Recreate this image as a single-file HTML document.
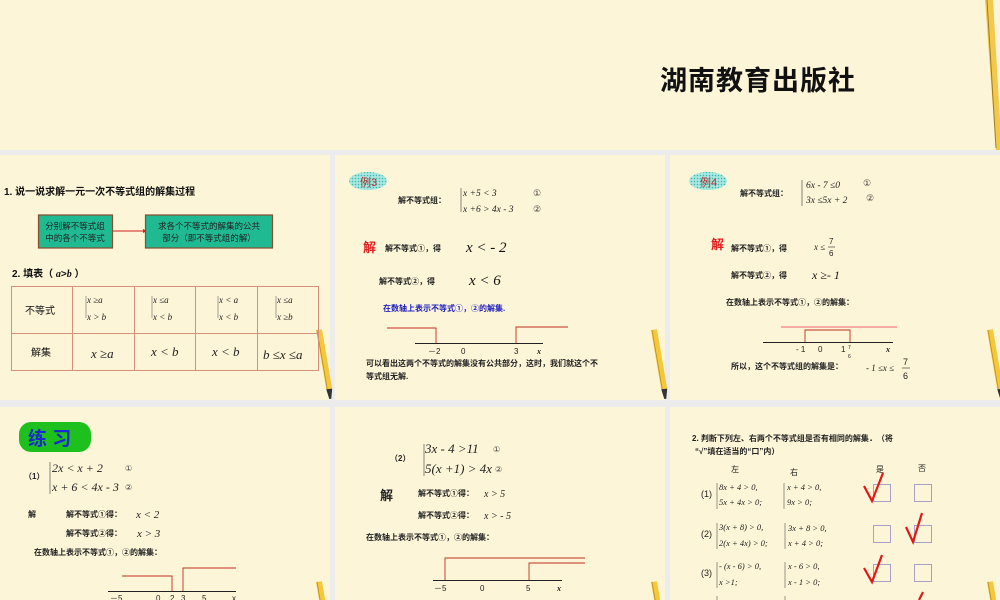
<!DOCTYPE html>
<html><head><meta charset="utf-8"><style>
html,body{margin:0;padding:0;background:#ececec;width:1000px;height:600px;overflow:hidden;}
svg{display:block}
.c{font-family:"Liberation Sans","Noto Sans CJK SC",sans-serif;}
.b{font-weight:bold}
.m{font-family:"Liberation Serif",serif;font-style:italic}
.n{font-family:"Liberation Sans",sans-serif}
</style></head><body>
<svg width="1000" height="600" viewBox="0 0 1000 600" xmlns="http://www.w3.org/2000/svg">
<defs>
<pattern id="dots" width="3" height="3" patternUnits="userSpaceOnUse"><rect width="3" height="3" fill="#a8e8e0"/><circle cx="1.5" cy="1.5" r="0.8" fill="#40b8b0"/></pattern>
<g id="pen"><polygon points="0,0 6,0 10,60 4,60" fill="#f4c83a"/><line x1="1" y1="0" x2="5" y2="60" stroke="#b89020" stroke-width="0.8"/><polygon points="4,60 10,60 8,70 6,70" fill="#333"/></g>
</defs>
<rect width="1000" height="600" fill="#ececec"/>
<!-- banner -->
<rect x="0" y="0" width="1000" height="150" fill="#fdf5d8"/>
<text x="660" y="90" class="c b" font-size="27" fill="#111" textLength="195">湖南教育出版社</text>
<polygon points="985,0 993,0 1000,120 1000,150 996,150" fill="#f2c94c"/>
<line x1="987" y1="0" x2="996" y2="148" stroke="#a07d20" stroke-width="1"/>
<!-- slides -->
<rect x="0" y="155" width="330" height="245" fill="#fdf5d8"/>
<rect x="335" y="155" width="330" height="245" fill="#fdf5d8"/>
<rect x="670" y="155" width="330" height="245" fill="#fdf5d8"/>
<rect x="0" y="407" width="330" height="193" fill="#fdf5d8"/>
<rect x="335" y="407" width="330" height="193" fill="#fdf5d8"/>
<rect x="670" y="407" width="330" height="193" fill="#fdf5d8"/>
<!-- pencils -->
<g transform="translate(316,330) rotate(-6)"><use href="#pen"/></g>
<g transform="translate(651,330) rotate(-6)"><use href="#pen"/></g>
<g transform="translate(987,330) rotate(-6)"><use href="#pen"/></g>
<g transform="translate(316,582) rotate(-6)"><use href="#pen"/></g>
<g transform="translate(651,582) rotate(-6)"><use href="#pen"/></g>
<g transform="translate(987,582) rotate(-6)"><use href="#pen"/></g>

<!-- slide 1 -->
<text x="4" y="195" class="c b" font-size="10" fill="#111">1. 说一说求解一元一次不等式组的解集过程</text>
<rect x="38.5" y="215" width="74" height="33" fill="#1fb992" stroke="#8b4a2b" stroke-width="1.2"/>
<text x="75" y="229" class="c" font-size="8.5" fill="#222" text-anchor="middle">分别解不等式组</text>
<text x="75" y="241" class="c" font-size="8.5" fill="#222" text-anchor="middle">中的各个不等式</text>
<line x1="113" y1="231" x2="143" y2="231" stroke="#d02020" stroke-width="1"/>
<polygon points="143,229 147,231 143,233" fill="#d02020"/>
<rect x="145.5" y="215" width="127" height="33" fill="#1fb992" stroke="#8b4a2b" stroke-width="1.2"/>
<text x="209" y="229" class="c" font-size="8.5" fill="#222" text-anchor="middle">求各个不等式的解集的公共</text>
<text x="209" y="241" class="c" font-size="8.5" fill="#222" text-anchor="middle">部分（即不等式组的解）</text>
<text x="12" y="277" class="c b" font-size="10" fill="#111">2. 填表（ <tspan class="m">a</tspan>&gt;<tspan class="m">b</tspan> ）</text>
<g stroke="#d4907a" stroke-width="1" fill="none">
<rect x="11.5" y="286.5" width="307" height="84"/>
<line x1="11" y1="333.5" x2="319" y2="333.5"/>
<line x1="72.5" y1="286" x2="72.5" y2="371"/>
<line x1="134.5" y1="286" x2="134.5" y2="371"/>
<line x1="195.5" y1="286" x2="195.5" y2="371"/>
<line x1="257.5" y1="286" x2="257.5" y2="371"/>
</g>
<text x="25" y="314" class="c" font-size="10" fill="#111">不等式</text>
<text x="31" y="356" class="c" font-size="10" fill="#111">解集</text>
<g class="m" font-size="9" fill="#222">
<text x="87" y="303">x ≥a</text><text x="87" y="320">x &gt; b</text>
<text x="153" y="303">x ≤a</text><text x="153" y="320">x &lt; b</text>
<text x="219" y="303">x &lt; a</text><text x="219" y="320">x &lt; b</text>
<text x="277" y="303">x ≤a</text><text x="277" y="320">x ≥b</text>
</g>
<path d="M86,296 v22 M152,296 v22 M218,296 v22 M276,296 v22" stroke="#666" stroke-width="0.6"/>
<g class="m" font-size="13" fill="#222">
<text x="91" y="358">x ≥a</text><text x="151" y="356">x &lt; b</text><text x="212" y="356">x &lt; b</text><text x="263" y="359">b ≤x ≤a</text>
</g>

<!-- slide 2 -->
<ellipse cx="368" cy="181" rx="19" ry="9" fill="url(#dots)"/>
<text x="360" y="186" class="c" font-size="11" fill="#b03030">例3</text>
<text x="398" y="203" class="c b" font-size="8" fill="#222">解不等式组：</text>
<path d="M461,188 v24" stroke="#555" stroke-width="0.7" fill="none"/>
<text x="463" y="196" class="m" font-size="9.5" fill="#222">x +5 &lt; 3</text>
<text x="463" y="212" class="m" font-size="9.5" fill="#222">x +6 &gt; 4x - 3</text>
<text x="533" y="196" class="n" font-size="9" fill="#444">①</text>
<text x="533" y="212" class="n" font-size="9" fill="#444">②</text>
<text x="363" y="252" class="c b" font-size="13" fill="#e02020">解</text>
<text x="385" y="251" class="c b" font-size="8" fill="#222">解不等式①，得</text>
<text x="466" y="252" class="m" font-size="15" fill="#111">x &lt; - 2</text>
<text x="379" y="284" class="c b" font-size="8" fill="#222">解不等式②，得</text>
<text x="469" y="285" class="m" font-size="15" fill="#111">x &lt; 6</text>
<text x="383" y="311" class="c b" font-size="8" fill="#2020c0">在数轴上表示不等式①，②的解集.</text>
<line x1="415" y1="343.5" x2="543" y2="343.5" stroke="#222" stroke-width="0.9"/>
<polyline points="387,328 436,328 436,343" fill="none" stroke="#c03020" stroke-width="0.9"/>
<polyline points="516,343 516,327 568,327" fill="none" stroke="#c03020" stroke-width="0.9"/>
<g class="n" font-size="8" fill="#222"><text x="428" y="354">－2</text><text x="461" y="354">0</text><text x="514" y="354">3</text><text x="537" y="354" class="m b">x</text></g>
<text x="366" y="366" class="c b" font-size="8" fill="#222">可以看出这两个不等式的解集没有公共部分，这时，我们就这个不</text>
<text x="366" y="379" class="c b" font-size="8" fill="#222">等式组无解.</text>

<!-- slide 3 -->
<ellipse cx="708" cy="181" rx="19" ry="9" fill="url(#dots)"/>
<text x="700" y="186" class="c" font-size="11" fill="#b03030">例4</text>
<text x="740" y="196" class="c b" font-size="8" fill="#222">解不等式组：</text>
<path d="M802,180 v26" stroke="#555" stroke-width="0.7" fill="none"/>
<text x="806" y="188" class="m" font-size="9.5" fill="#222">6x - 7 ≤0</text>
<text x="806" y="203" class="m" font-size="9.5" fill="#222">3x ≤5x + 2</text>
<text x="863" y="186" class="n" font-size="9" fill="#444">①</text>
<text x="866" y="201" class="n" font-size="9" fill="#444">②</text>
<text x="711" y="249" class="c b" font-size="13" fill="#e02020">解</text>
<text x="731" y="251" class="c b" font-size="8" fill="#222">解不等式①，得</text>
<text x="814" y="250" class="m" font-size="9" fill="#222">x ≤</text>
<text x="829" y="244" class="n" font-size="8" fill="#222">7</text><line x1="828" y1="247" x2="835" y2="247" stroke="#222" stroke-width="0.6"/><text x="829" y="256" class="n" font-size="8" fill="#222">6</text>
<text x="731" y="278" class="c b" font-size="8" fill="#222">解不等式②，得</text>
<text x="812" y="279" class="m" font-size="12" fill="#111">x ≥- 1</text>
<text x="726" y="305" class="c b" font-size="8" fill="#222">在数轴上表示不等式①，②的解集：</text>
<line x1="763" y1="342.5" x2="893" y2="342.5" stroke="#222" stroke-width="0.9"/>
<line x1="781" y1="327" x2="897" y2="327" stroke="#f06070" stroke-width="0.9"/>
<polyline points="805,342 805,330 850,330 850,342" fill="none" stroke="#c03020" stroke-width="0.9"/>
<g class="n" font-size="8" fill="#222"><text x="796" y="352">- 1</text><text x="818" y="352">0</text><text x="841" y="352">1</text><text x="848" y="349" font-size="5">7</text><text x="848" y="358" font-size="5">6</text><text x="886" y="352" class="m b">x</text></g>
<text x="731" y="369" class="c b" font-size="8" fill="#222">所以，这个不等式组的解集是：</text>
<text x="866" y="371" class="m" font-size="9" fill="#222">- 1 ≤x ≤</text>
<text x="903" y="365" class="n" font-size="9" fill="#222">7</text><line x1="902" y1="368" x2="910" y2="368" stroke="#222" stroke-width="0.6"/><text x="903" y="379" class="n" font-size="9" fill="#222">6</text>

<!-- slide 4 -->
<rect x="19" y="422" width="72" height="30" rx="12" fill="#1ec01e"/>
<text x="28" y="445" class="c b" font-size="19" fill="#1a2ad0">练 习</text>
<text x="24" y="479" class="c b" font-size="8" fill="#222">（1）</text>
<path d="M50,462 v32" stroke="#555" stroke-width="0.7" fill="none"/>
<text x="52" y="472" class="m" font-size="12" fill="#222">2x &lt; x + 2</text>
<text x="52" y="491" class="m" font-size="12" fill="#222">x + 6 &lt; 4x - 3</text>
<text x="125" y="471" class="n" font-size="8" fill="#444">①</text>
<text x="125" y="490" class="n" font-size="8" fill="#444">②</text>
<text x="28" y="517" class="c b" font-size="8" fill="#222">解</text>
<text x="66" y="517" class="c b" font-size="8" fill="#222">解不等式①得：</text>
<text x="136" y="518" class="m" font-size="11" fill="#222">x &lt; 2</text>
<text x="66" y="536" class="c b" font-size="8" fill="#222">解不等式②得：</text>
<text x="137" y="537" class="m" font-size="11" fill="#222">x &gt; 3</text>
<text x="34" y="555" class="c b" font-size="8" fill="#222">在数轴上表示不等式①，②的解集：</text>
<line x1="108" y1="591.5" x2="236" y2="591.5" stroke="#222" stroke-width="0.9"/>
<polyline points="122,576 172,576 172,591" fill="none" stroke="#c03020" stroke-width="0.9"/>
<polyline points="183,591 183,568 236,568" fill="none" stroke="#c03020" stroke-width="0.9"/>
<g class="n" font-size="8" fill="#222"><text x="110" y="601">－5</text><text x="156" y="601">0</text><text x="170" y="601">2</text><text x="181" y="601">3</text><text x="202" y="601">5</text><text x="232" y="601">x</text></g>

<!-- slide 5 -->
<text x="390" y="461" class="c b" font-size="8" fill="#222">（2）</text>
<path d="M424,444 v32" stroke="#555" stroke-width="0.7" fill="none"/>
<text x="425" y="453" class="m" font-size="13" fill="#222">3x - 4 &gt;11</text>
<text x="425" y="473" class="m" font-size="13" fill="#222">5(x +1) &gt; 4x</text>
<text x="493" y="452" class="n" font-size="8" fill="#444">①</text>
<text x="495" y="472" class="n" font-size="8" fill="#444">②</text>
<text x="380" y="500" class="c b" font-size="13" fill="#222">解</text>
<text x="418" y="496" class="c b" font-size="8" fill="#222">解不等式①得：</text>
<text x="484" y="497" class="m" font-size="10" fill="#222">x &gt; 5</text>
<text x="418" y="518" class="c b" font-size="8" fill="#222">解不等式②得：</text>
<text x="484" y="519" class="m" font-size="10" fill="#222">x &gt; - 5</text>
<text x="366" y="540" class="c b" font-size="8" fill="#222">在数轴上表示不等式①，②的解集：</text>
<line x1="433" y1="580.5" x2="562" y2="580.5" stroke="#222" stroke-width="0.9"/>
<polyline points="445,580 445,558 585,558" fill="none" stroke="#c03020" stroke-width="0.9"/>
<polyline points="529,580 529,563 585,563" fill="none" stroke="#c03020" stroke-width="0.9"/>
<g class="n" font-size="8" fill="#222"><text x="434" y="591">－5</text><text x="480" y="591">0</text><text x="526" y="591">5</text><text x="557" y="591" class="m b">x</text></g>

<!-- slide 6 -->
<text x="692" y="441" class="c b" font-size="8" fill="#222">2. 判断下列左、右两个不等式组是否有相同的解集．（将</text>
<text x="695" y="454" class="c b" font-size="8" fill="#222">“√”填在适当的“口”内）</text>
<g class="c" font-size="8" fill="#222"><text x="731" y="472">左</text><text x="790" y="475">右</text><text x="876" y="472">是</text><text x="918" y="471">否</text></g>
<g class="n" font-size="9" fill="#222"><text x="701" y="497">(1)</text><text x="701" y="537">(2)</text><text x="701" y="576">(3)</text></g>
<path d="M717,483 v26 M784,483 v26 M717,523 v26 M785,523 v26 M717,562 v26 M785,562 v26 M717,596 v6 M785,596 v6" stroke="#555" stroke-width="0.6" fill="none"/>
<g class="m" font-size="8.5" fill="#222">
<text x="719" y="490">8x + 4 &gt; 0,</text><text x="719" y="505">5x + 4x &gt; 0;</text>
<text x="787" y="490">x + 4 &gt; 0,</text><text x="787" y="505">9x &gt; 0;</text>
<text x="719" y="530">3(x + 8) &gt; 0,</text><text x="719" y="546">2(x + 4x) &gt; 0;</text>
<text x="788" y="531">3x + 8 &gt; 0,</text><text x="788" y="546">x + 4 &gt; 0;</text>
<text x="719" y="569">- (x - 6) &gt; 0,</text><text x="719" y="585">x &gt;1;</text>
<text x="788" y="569">x - 6 &gt; 0,</text><text x="788" y="585">x - 1 &gt; 0;</text>
</g>
<g fill="none" stroke="#a8a0c8" stroke-width="1">
<rect x="873.5" y="484.5" width="17" height="17"/><rect x="914.5" y="484.5" width="17" height="17"/>
<rect x="873.5" y="525.5" width="17" height="17"/><rect x="914.5" y="525.5" width="17" height="17"/>
<rect x="873.5" y="564.5" width="17" height="17"/><rect x="914.5" y="564.5" width="17" height="17"/>
</g>
<g fill="none" stroke="#e01818" stroke-width="2.2" stroke-linejoin="miter">
<polyline points="864,486 872,501 883,473"/>
<polyline points="906,527 913,542 922,513"/>
<polyline points="864,568 872,582 882,555"/>
<polyline points="919,600 923,592"/>
</g>
</svg>
</body></html>
